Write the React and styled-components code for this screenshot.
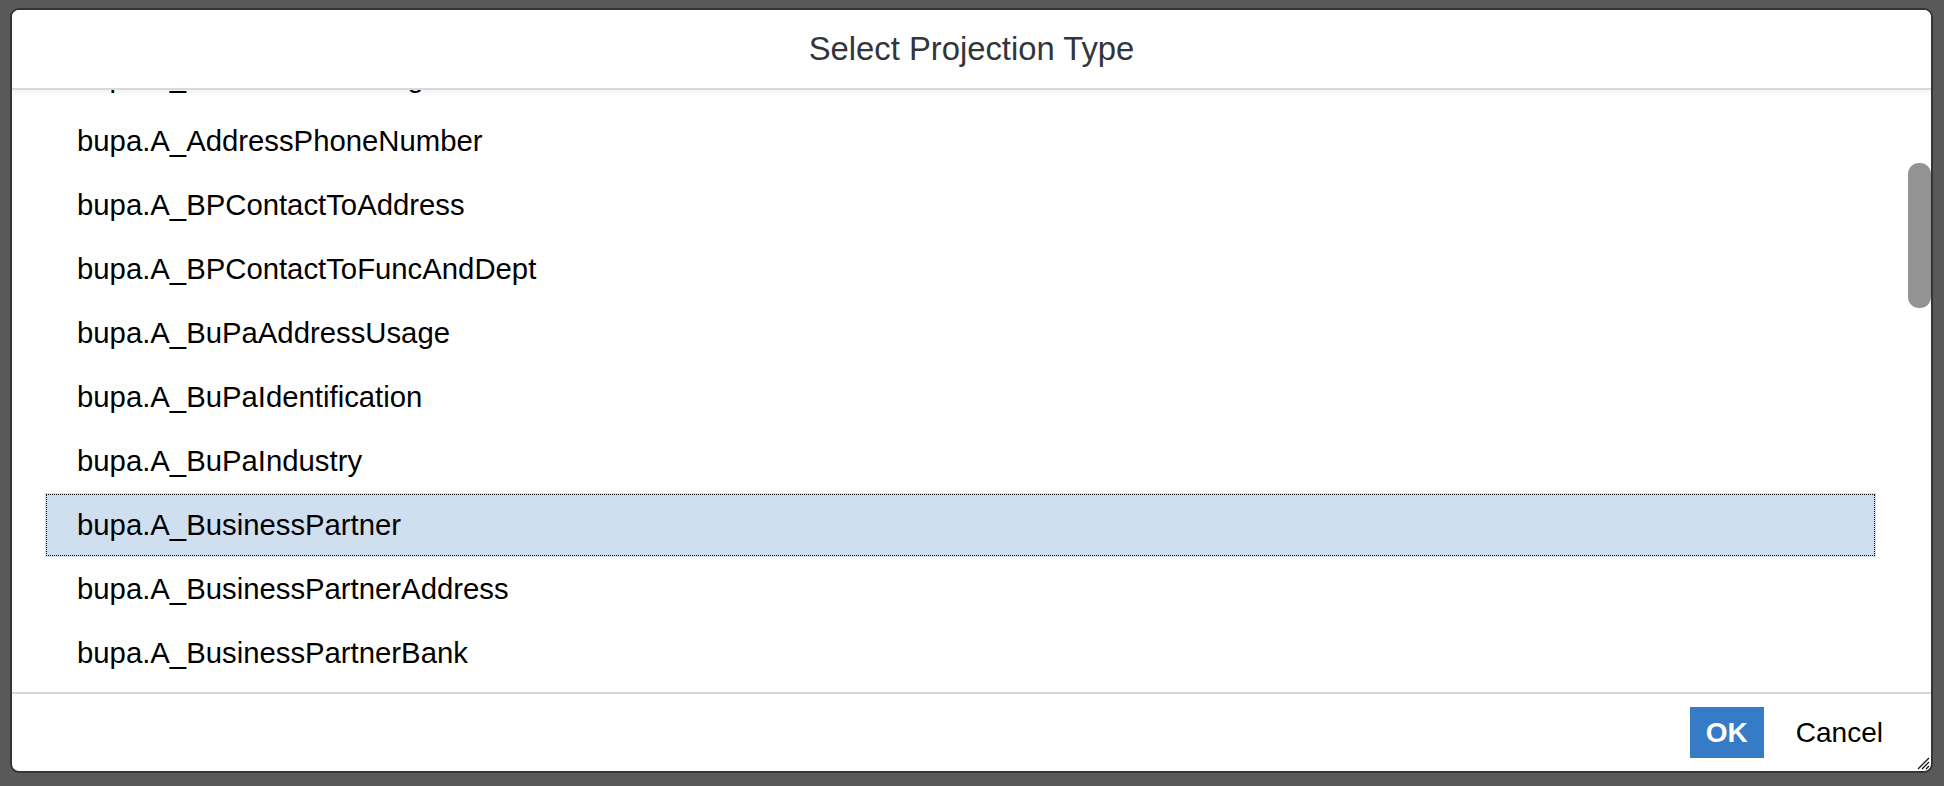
import React, { useLayoutEffect, useRef, useState } from "react";
import styled, { createGlobalStyle } from "styled-components";

const GlobalStyle = createGlobalStyle`
  html, body { margin: 0; padding: 0; }
  body {
    background: #595959;
    font-family: "Liberation Sans", Arial, Helvetica, sans-serif;
  }
`;

const Page = styled.div`
  box-sizing: border-box;
  width: 1944px;
  height: 786px;
  padding: 8px 11px 13px 10px;
  display: flex;
  background: #595959;
`;

const Dialog = styled.div`
  position: relative;
  flex: 1;
  display: flex;
  flex-direction: column;
  background: #fff;
  border: 2px solid #343434;
  border-radius: 9px;
  overflow: hidden;
  min-height: 0;
`;

const Header = styled.header`
  position: relative;
  z-index: 1;
  height: 78px;
  flex: none;
  display: flex;
  align-items: center;
  justify-content: center;
  border-bottom: 2px solid #d9d9d9;
  box-shadow: 0 3px 5px rgba(0, 0, 0, 0.05);
  background: #fff;
`;

const Title = styled.h1`
  margin: 0;
  font-size: 32.8px;
  font-weight: 400;
  color: #32363a;
`;

const ListArea = styled.div`
  position: relative;
  flex: 1;
  min-height: 0;
  display: flex;
`;

const List = styled.ul`
  flex: 1;
  margin: 0;
  padding: 0 55px 0 33px;
  list-style: none;
  overflow-y: scroll;
  scrollbar-width: none;
  &::-webkit-scrollbar { display: none; }
`;

const ScrollThumb = styled.div`
  position: absolute;
  right: 0;
  width: 23px;
  background: #939393;
  border-radius: 11px;
`;

const Row = styled.li`
  box-sizing: border-box;
  height: 64px;
  display: flex;
  align-items: center;
  padding-left: 32px;
  font-size: 29.3px;
  color: #000;
  white-space: nowrap;
  background: ${(p) => (p.$selected ? "#d0dff0" : "transparent")};
  outline: ${(p) => (p.$selected ? "1px dotted #000" : "none")};
  outline-offset: -2px;
`;

const Footer = styled.footer`
  position: relative;
  flex: none;
  height: 77px;
  border-top: 2px solid #d6d6d6;
  display: flex;
  align-items: center;
  justify-content: flex-end;
  gap: 16px;
  padding-right: 32px;
`;

const Button = styled.button`
  box-sizing: border-box;
  height: 51px;
  border: none;
  border-radius: 0;
  font-family: inherit;
  font-size: 28px;
  cursor: pointer;
  padding: 0 16px;
  min-width: ${(p) => (p.$primary ? "73px" : "auto")};
  background: ${(p) => (p.$primary ? "#357bc6" : "transparent")};
  color: ${(p) => (p.$primary ? "#fff" : "#000")};
  font-weight: ${(p) => (p.$primary ? 700 : 400)};
`;

const Grip = styled.svg`
  position: absolute;
  right: 1px;
  bottom: 1px;
  width: 16px;
  height: 16px;
`;

const items = [
  "bupa.A_AddrDepdntIntlLocNumber",
  "bupa.A_AddressEmailAddress",
  "bupa.A_AddressFaxNumber",
  "bupa.A_AddressHomePage",
  "bupa.A_AddressHomePageURL",
  "bupa.A_AddressPhoneNumber",
  "bupa.A_BPContactToAddress",
  "bupa.A_BPContactToFuncAndDept",
  "bupa.A_BuPaAddressUsage",
  "bupa.A_BuPaIdentification",
  "bupa.A_BuPaIndustry",
  "bupa.A_BusinessPartner",
  "bupa.A_BusinessPartnerAddress",
  "bupa.A_BusinessPartnerBank",
  "bupa.A_BusinessPartnerContact",
  "bupa.A_BusinessPartnerPaymentCard",
  "bupa.A_BusinessPartnerRating",
  "bupa.A_BusinessPartnerRole",
  "bupa.A_BusinessPartnerTaxNumber",
  "bupa.A_BusPartAddrDepdntTaxNmbr",
  "bupa.A_CustAddrDepdntExtIdentifier",
  "bupa.A_CustAddrDepdntInformation",
  "bupa.A_CustSalesPartnerFunc",
  "bupa.A_CustSlsAreaAddrDepdntInfo",
  "bupa.A_CustSlsAreaAddrDepdntTaxInfo",
  "bupa.A_CustUnloadingPointAddrDepdntInfo",
  "bupa.A_Customer",
  "bupa.A_CustomerCompany",
  "bupa.A_CustomerCompanyText",
  "bupa.A_CustomerDunning",
  "bupa.A_CustomerSalesArea",
  "bupa.A_CustomerSalesAreaTax",
  "bupa.A_CustomerSalesAreaText",
  "bupa.A_CustomerTaxGrouping",
  "bupa.A_CustomerText",
  "bupa.A_CustomerUnloadingPoint",
  "bupa.A_CustomerWithHoldingTax",
  "bupa.A_Supplier",
  "bupa.A_SupplierCompany",
];

const SELECTED = "bupa.A_BusinessPartner";

export default function App() {
  const listRef = useRef(null);
  const [thumb, setThumb] = useState({ top: 72, height: 145 });

  useLayoutEffect(() => {
    const el = listRef.current;
    if (!el) return;
    el.scrollTop = 301;
    const update = () => {
      const { scrollTop, scrollHeight, clientHeight } = el;
      setThumb({
        top: (scrollTop / scrollHeight) * clientHeight,
        height: (clientHeight * clientHeight) / scrollHeight,
      });
    };
    update();
    el.addEventListener("scroll", update);
    return () => el.removeEventListener("scroll", update);
  }, []);

  return (
    <>
      <GlobalStyle />
      <Page>
        <Dialog role="dialog" aria-label="Select Projection Type">
          <Header>
            <Title>Select Projection Type</Title>
          </Header>
          <ListArea>
            <List ref={listRef}>
              {items.map((name) => (
                <Row key={name} $selected={name === SELECTED}>
                  {name}
                </Row>
              ))}
            </List>
            <ScrollThumb style={{ top: thumb.top, height: thumb.height }} />
          </ListArea>
          <Footer>
            <Button $primary>OK</Button>
            <Button>Cancel</Button>
            <Grip viewBox="0 0 16 16">
              <path d="M15 4 L4 15 M15 8 L8 15 M15 12 L12 15" stroke="#111" strokeWidth="1.3" />
            </Grip>
          </Footer>
        </Dialog>
      </Page>
    </>
  );
}
